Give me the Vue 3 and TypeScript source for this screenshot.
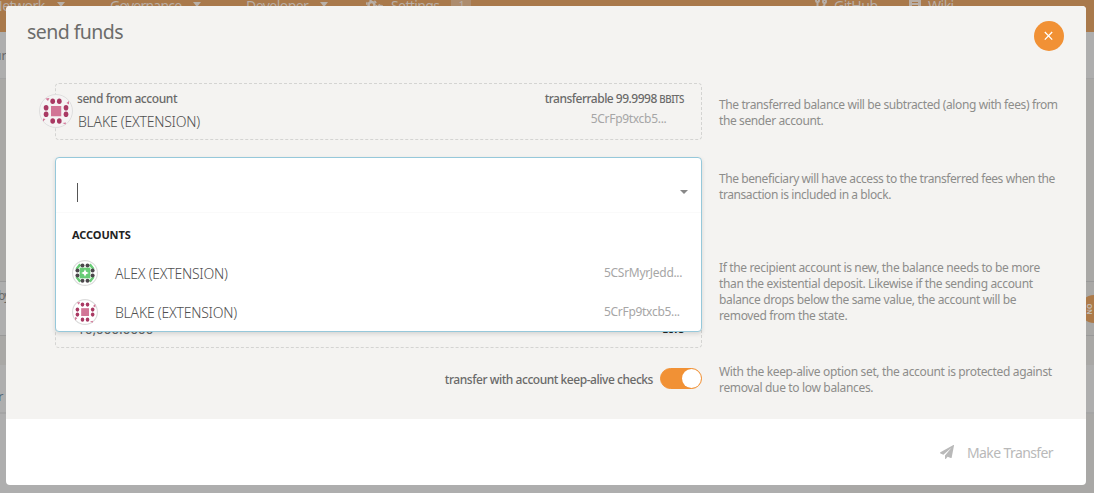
<script setup lang="ts">
interface Account {
  name: string
  address: string
  kind: 'alex' | 'blake'
}
interface Dot {
  x: number
  y: number
}

const accounts: Account[] = [
  { name: 'ALEX (EXTENSION)', address: '5CSrMyrJedd...', kind: 'alex' },
  { name: 'BLAKE (EXTENSION)', address: '5CrFp9txcb5...', kind: 'blake' },
]

const dots: Dot[] = [
  { x: 27.4, y: 14.5 }, { x: 40.6, y: 14.5 }, { x: 27.4, y: 54 }, { x: 40.6, y: 54 },
  { x: 14.2, y: 27.6 }, { x: 14.2, y: 40.6 }, { x: 54, y: 27.6 }, { x: 54, y: 40.6 },
]
</script>

<template>
  <div class="page">
    <header class="topbar">
      <span class="nav network">Network <i class="caret"></i></span>
      <span class="nav governance">Governance <i class="caret"></i></span>
      <span class="nav developer">Developer <i class="caret"></i></span>
      <span class="nav settings">
        <svg width="18" height="16" viewBox="0 0 18 16" fill="none" stroke="currentColor"><circle cx="5.500" cy="7" r="3" stroke-width="2.500" /><circle cx="5.500" cy="7" r="5" stroke-width="1.500" stroke-dasharray="2.600 2.600" /><circle cx="14" cy="10" r="2.200" stroke-width="2" /><circle cx="14" cy="10" r="3.500" stroke-width="1" stroke-dasharray="1.800 1.800" /></svg>
        <span class="settings-text">Settings</span><b class="badge">1</b>
      </span>
      <span class="nav github">
        <svg width="12" height="14" viewBox="0 0 12 14" fill="none" stroke="currentColor" stroke-width="2"><path d="M2.500 3v10M9.500 4v2q0 3-3 3h-4" /><circle cx="2.500" cy="2.500" r="1.500" /><circle cx="9.500" cy="3.500" r="1.500" /></svg>
        GitHub
      </span>
      <span class="nav wiki">
        <svg width="12" height="14" viewBox="0 0 12 14"><path fill="currentColor" fill-rule="evenodd" d="M2 0h10v14H2L0 12V2zM3 4v1h6V4zM3 7v1h6V7z" /></svg>
        Wiki
      </span>
    </header>
    <div class="tabs"><span>ur</span></div>
    <div class="band"></div>
    <div class="row-text"><span>by</span></div>
    <div class="band short"></div>
    <div class="row-link"><span>r</span></div>
    <div class="rest"></div>
    <div class="side-badge"><span>ON</span></div>

    <section class="modal">
      <div class="body">
        <div class="title-row">
          <h1>send funds</h1>
          <button class="close" aria-label="Close">
            <svg width="10" height="10" viewBox="0 0 10 10"><path d="M.8 1l7.400 7.600M8.200 1L.8 8.600" stroke="#fff" stroke-width="1.300" /></svg>
          </button>
        </div>

        <div class="columns">
          <div class="form">
            <div class="field">
              <svg class="icon big" viewBox="0 0 68 68">
                <circle cx="34" cy="34" r="33" fill="#f5f3f3" stroke="#dedede" stroke-width="2" />
                <path d="M13 9l8-1-3 6zM60 14v7l-5-3zM8 49v6l5-5zM47 58l7-1-1 4z" fill="#d27596" />
                <rect x="24" y="24" width="20.500" height="20.500" fill="#d27596" />
                <ellipse v-for="(d, i) in dots" :key="i" :cx="d.x" :cy="d.y" rx="4.700" ry="5.600" fill="#a93963" />
              </svg>
              <div class="field-main">
                <span class="label from">send from account</span>
                <span class="name sel">BLAKE (EXTENSION)</span>
              </div>
              <div class="field-side">
                <span class="label balance"><b>transferrable 99.</b>9998 <small>BBITS</small></span>
                <span class="address">5CrFp9txcb5...</span>
              </div>
            </div>

            <div class="amount">
              <span class="amount-value">10,000.0000</span><b class="unit">BITS</b>
              <div class="dropdown">
                <div class="search"><i class="cursor"></i><i class="arrow"></i></div>
                <div class="list">
                  <h2>ACCOUNTS</h2>
                  <div v-for="a in accounts" :key="a.name" class="option">
                    <svg class="icon" viewBox="0 0 68 68">
                      <circle cx="34" cy="34" r="32.500" fill="#fff" stroke="#dcdcdc" stroke-width="3" />
                      <template v-if="a.kind === 'alex'">
                        <path d="M9 22l10-13 5 5-9 10zM59 22l-10-13-5 5 9 10zM9 46l10 13 5-5-9-10zM59 46l-10 13-5-5 9-10z" fill="#67cc75" />
                        <rect x="20" y="20" width="28" height="28" fill="#67cc75" />
                        <path d="M34 24l3 7 7 3-7 3-3 7-3-7-7-3 7-3z" fill="#fff" />
                        <circle v-for="(d, i) in dots" :key="i" :cx="d.x" :cy="d.y" r="5.200" fill="#4c474c" />
                      </template>
                      <template v-else>
                        <path d="M13 9l8-1-3 7zM61 13v9l-6-4zM8 47v9l6-6zM47 59l8-2-1 5z" fill="#d27596" />
                        <rect x="24" y="24" width="20.500" height="20.500" fill="#d27596" />
                        <ellipse v-for="(d, i) in dots" :key="i" :cx="d.x" :cy="d.y" rx="4.700" ry="5.600" fill="#a93963" />
                      </template>
                    </svg>
                    <span class="name">{{ a.name }}</span>
                    <span class="address">{{ a.address }}</span>
                  </div>
                </div>
              </div>
            </div>

            <div class="keep">
              <span class="label keep-label">transfer with account keep-alive checks</span>
              <span class="toggle"></span>
            </div>
          </div>

          <div class="help">
            <p class="sender"><span>The transferred balance will be subtracted (along with fees) from</span><span>the sender account.</span></p>
            <p class="beneficiary"><span>The beneficiary will have access to the transferred fees when the</span><span>transaction is included in a block.</span></p>
            <p class="deposit"><span>If the recipient account is new, the balance needs to be more</span><span>than the existential deposit. Likewise if the sending account</span><span>balance drops below the same value, the account will be</span><span>removed from the state.</span></p>
            <p class="alive"><span>With the keep-alive option set, the account is protected against</span><span>removal due to low balances.</span></p>
          </div>
        </div>
      </div>

      <footer>
        <svg width="14" height="14" viewBox="0 0 14 14"><path d="M13.400 0 .4 7.300c-.6.400-.4 1 .1 1.200l2.900 1.200L11.500 2.700 5 10.600V13.500c0 .6.700.7 1 .3l1.600-2.100 3.200 1.300c.5.200.8-.1.900-.5L14 .5c.1-.4-.2-.7-.6-.5Z" fill="#b9b9b9" /></svg>
        <span>Make Transfer</span>
      </footer>
    </section>
  </div>
</template>

<style>
html, body { margin: 0; overflow: hidden; }
</style>

<style scoped>
* { box-sizing: border-box; }
.page { position: relative; width: 1094px; height: 493px; overflow: hidden; background: #aeaeae; font-family: "Noto Sans", "Open Sans", sans-serif; color: #666; }
.topbar { position: relative; height: 32px; background: #a9794b; color: #b8aea6; }
.nav { position: absolute; top: -7px; display: flex; align-items: center; font-size: 14px; line-height: 25px; white-space: nowrap; font-weight: 400; letter-spacing: -.5px; }
.caret { border: 4.500px solid transparent; border-top: 5px solid #b8b0a8; border-bottom: 0; margin: -3px 0 0 12px; }
.network { left: -8px; }
.governance { left: 110px; letter-spacing: -.75px; }
.developer { left: 246px; letter-spacing: -.55px; }
.settings { left: 366px; }
.settings-text { margin-left: 7px; letter-spacing: -.6px; }
.badge { margin: -2px 0 0 12px; width: 20px; height: 18px; border-radius: 4px; background: #ad8c6e; font-size: 11px; line-height: 18px; text-align: center; font-weight: 400; }
.github { left: 815px; gap: 7px; }
.github svg, .wiki svg { margin-top: -2px; }
.wiki { left: 909px; gap: 7px; }
.tabs { height: 47px; padding-top: 15px; border-bottom: 1px solid #a3a3a3; font-size: 12px; }
.tabs span { display: block; margin-left: -6px; }
.band { height: 203px; background: #a9a8a6; border-bottom: 1px solid #999; }
.row-text { height: 54px; padding-top: 5px; background: linear-gradient(90deg, #aeaeae 50%, #a9a8a6 50%); font-size: 12px; border-bottom: 1px solid #999; }
.row-text span { display: block; margin-left: -2px; letter-spacing: -1px; }
.band.short { height: 29px; border: 0; }
.row-link { height: 49px; padding-top: 22px; border-bottom: 2px solid #a5a5a5; font-size: 13px; color: #526779; }
.row-link span { display: block; margin-left: -2px; }
.rest { height: 79px; background: linear-gradient(90deg, #aeaeae 830px, #a9a8a6 830px); }
.side-badge { position: absolute; right: -14px; top: 295px; width: 28px; height: 28px; border-radius: 50%; background: #ad7a49; color: #c0bab4; }
.side-badge span { position: absolute; left: 3px; top: 8px; width: 12px; text-align: center; font: bold 7px/12px "Noto Sans", sans-serif; transform: rotate(90deg); }

.modal { position: absolute; left: 6px; top: 6px; width: 1080px; height: 479px; border-radius: 4px; overflow: hidden; background: #fff; }
.body { height: 413px; background: #f4f3f1; }
.title-row { display: flex; justify-content: space-between; height: 77px; padding: 0 22px 0 21px; }
h1 { margin: 12px 0 0; font-size: 19.500px; line-height: 28px; font-weight: 400; letter-spacing: -.55px; color: #6c6c6a; }
.close { margin-top: 15px; width: 30px; height: 30px; border: 0; border-radius: 50%; padding: 0; background: #f19135; display: flex; align-items: center; justify-content: center; }
.columns { display: flex; }
.form { width: 647px; margin-left: 49px; }
.field { position: relative; display: flex; justify-content: space-between; height: 57px; border: 1px dashed #d4d4d2; border-radius: 4px; padding: 0 17px 0 21px; }
.icon { width: 26px; height: 26px; flex: none; }
.icon.big { position: absolute; left: -17px; top: 10px; width: 34px; height: 34px; }
.field-main, .field-side { display: flex; flex-direction: column; }
.label { font-size: 12px; line-height: 16px; font-weight: 500; color: #6a6a69; white-space: nowrap; }
.from { margin-top: 7px; letter-spacing: -.43px; }
.name { font-size: 14px; line-height: 20px; font-weight: 300; letter-spacing: -.23px; white-space: nowrap; color: #505050; }
.sel { margin: 5px 0 0 1px; }
.balance { margin-top: 7px; letter-spacing: -.51px; }
.balance b { font-weight: 500; }
.balance small { font-size: 9.800px; }
.address { font-size: 12px; line-height: 16px; letter-spacing: -.3px; color: #a6a6a6; white-space: nowrap; }
.field-side .address { margin: 3px 0 0 46px; }
.amount { position: relative; display: flex; justify-content: space-between; align-items: flex-end; height: 56px; margin-top: 152px; padding: 0 17px 8px 21px; border: 1px dashed #d4d4d2; border-radius: 4px; font-size: 14px; line-height: 20px; letter-spacing: -.3px; }
.unit { font-size: 10.500px; letter-spacing: -.3px; color: #222; }
.dropdown { position: absolute; left: -1px; top: -136px; width: 647px; height: 175px; border: 1px solid #96c8da; border-radius: 4px; background: #fff; box-shadow: 0 2px 4px rgba(34,36,38,.14); letter-spacing: normal; }
.search { display: flex; align-items: flex-start; justify-content: space-between; height: 55px; padding: 25px 13px 0 21px; border-bottom: 1px solid #fafafa; }
.cursor { width: 1px; height: 19px; background: #555; }
.arrow { margin-top: 7px; border: 4px solid transparent; border-top: 4px solid #888; border-bottom: 0; }
.list { padding: 14px 16px 0; }
h2 { margin: 0 0 10px; font-size: 11px; line-height: 16px; font-weight: 700; letter-spacing: -.1px; color: #222; }
.option { display: flex; align-items: center; height: 39px; }
.option .name { margin: 3px 0 0 17px; }
.option .address { width: 81px; margin-left: auto; }
.keep { display: flex; justify-content: flex-end; align-items: center; height: 21px; margin-top: 20px; gap: 7px; }
.keep-label { margin-top: 2px; letter-spacing: -.46px; }
.toggle { display: flex; justify-content: flex-end; width: 42px; height: 21px; border-radius: 11px; border: 1px solid #f19135; background: #f19135; }
.toggle::after { content: ""; width: 19px; height: 19px; border-radius: 50%; background: #fff; }
.help { margin-left: 17px; font-size: 12px; line-height: 16px; letter-spacing: -.39px; color: #8d8d8b; white-space: nowrap; }
.help p { margin: 0; }
.help p span { display: block; }
.help .sender { margin-top: 14px; }
.help .beneficiary { margin-top: 42px; letter-spacing: -.42px; }
.help .deposit { margin-top: 57px; letter-spacing: -.35px; }
.help .alive { margin-top: 40px; letter-spacing: -.34px; }
footer { display: flex; align-items: center; justify-content: flex-end; height: 66px; padding-right: 33px; font-size: 14px; letter-spacing: -.6px; color: #b9b9b9; }
footer span { margin-left: 13px; }
</style>
